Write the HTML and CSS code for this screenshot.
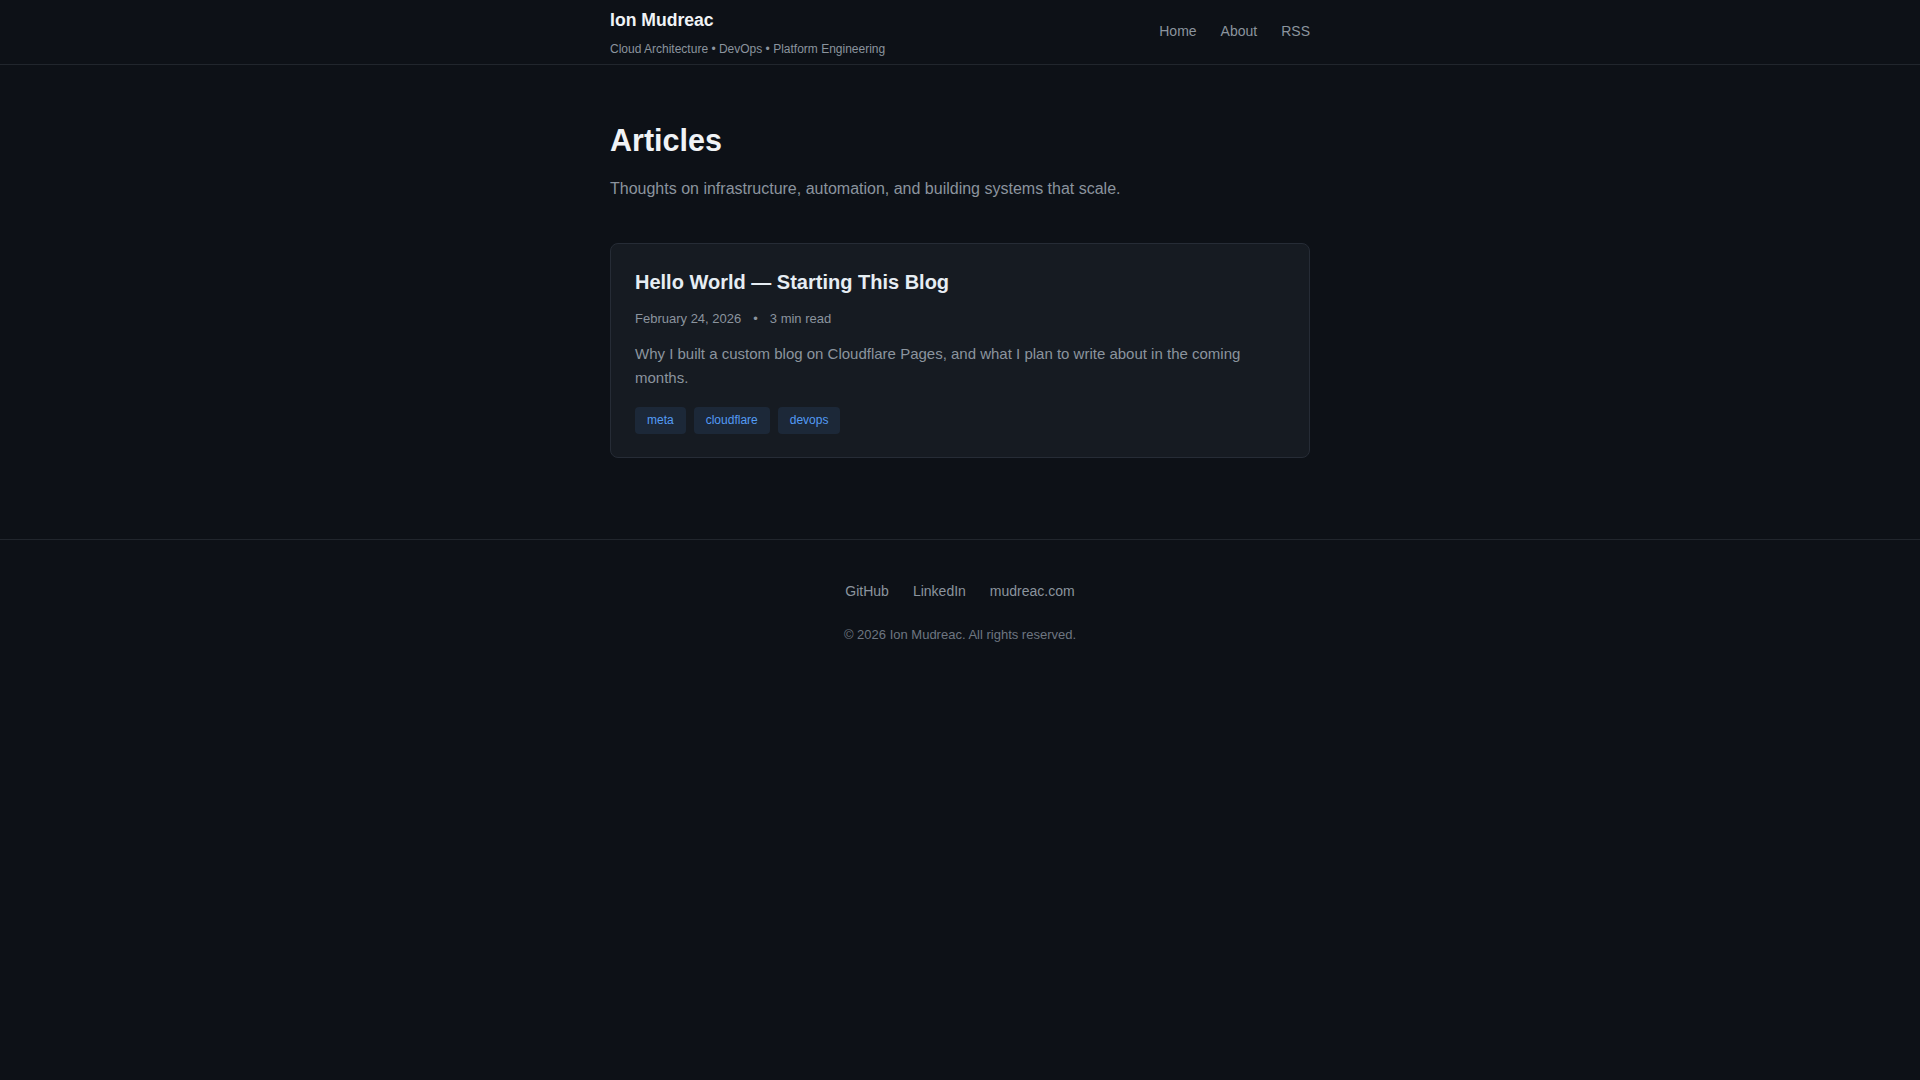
FILE: index.html
```html
<!DOCTYPE html>
<html lang="en">
<head>
<meta charset="utf-8">
<title>Ion Mudreac — Articles</title>
<link rel="stylesheet" href="styles.css">
</head>
<body>
<header class="site-header">
  <div class="container header-inner">
    <div class="brand">
      <a class="site-name" href="#">Ion Mudreac</a>
      <p class="site-tagline">Cloud Architecture • DevOps • Platform Engineering</p>
    </div>
    <nav class="nav">
      <a href="#">Home</a>
      <a href="#">About</a>
      <a href="#">RSS</a>
    </nav>
  </div>
</header>

<main class="container main">
  <h1 class="page-title">Articles</h1>
  <p class="page-lead">Thoughts on infrastructure, automation, and building systems that scale.</p>

  <article class="post-card">
    <h2 class="post-title"><a href="#">Hello World — Starting This Blog</a></h2>
    <div class="post-meta">
      <span>February 24, 2026</span>
      <span class="sep">•</span>
      <span>3 min read</span>
    </div>
    <p class="post-excerpt">Why I built a custom blog on Cloudflare Pages, and what I plan to write about in the coming months.</p>
    <div class="tags">
      <a class="tag" href="#">meta</a>
      <a class="tag" href="#">cloudflare</a>
      <a class="tag" href="#">devops</a>
    </div>
  </article>
</main>

<footer class="site-footer">
  <div class="footer-links">
    <a href="#">GitHub</a>
    <a href="#">LinkedIn</a>
    <a href="#">mudreac.com</a>
  </div>
  <p class="copyright">© 2026 Ion Mudreac. All rights reserved.</p>
</footer>
</body>
</html>
```

FILE: styles.css
```css
* { box-sizing: border-box; }

html, body {
  margin: 0;
  padding: 0;
}

body {
  background: #0d1117;
  color: #e6edf3;
  font-family: "Liberation Sans", Arial, sans-serif;
  min-height: 100vh;
}

a { text-decoration: none; color: inherit; }

.container {
  width: 700px;
  margin: 0 auto;
}

.site-header {
  border-bottom: 1px solid #21262d;
}

.header-inner {
  display: flex;
  justify-content: space-between;
  align-items: center;
  padding: 8px 0 6px;
}

.brand {
  display: flex;
  flex-direction: column;
}

.site-name {
  font-size: 17.6px;
  font-weight: 700;
  line-height: 24px;
  color: #f0f3f6;
}

.site-tagline {
  margin: 8px 0 0;
  font-size: 12px;
  line-height: 18px;
  color: #8b949e;
}

.nav {
  display: flex;
  gap: 24px;
  font-size: 14px;
  line-height: 20px;
  margin-bottom: 4px;
}

.nav a { color: #8b949e; }

.main {
  padding: 57px 0 49px;
}

.page-title {
  margin: 0;
  font-size: 30.5px;
  line-height: 36px;
  font-weight: 700;
  color: #f0f3f6;
}

.page-lead {
  margin: 18px 0 0;
  font-size: 16px;
  line-height: 25.6px;
  color: #8b949e;
}

.post-card {
  margin-top: 41px;
  background: #161b22;
  border: 1px solid #262c36;
  border-radius: 8px;
  padding: 24px 24px 23px;
}

.post-title {
  margin: 0 0 13px;
  font-size: 20px;
  line-height: 28px;
  font-weight: 700;
  color: #e6edf3;
}

.post-meta {
  display: flex;
  align-items: center;
  gap: 12px;
  font-size: 13px;
  line-height: 19.5px;
  color: #8b949e;
}

.post-excerpt {
  margin: 13.5px 0 0;
  font-size: 15px;
  line-height: 24px;
  color: #8b949e;
}

.tags {
  display: flex;
  gap: 8px;
  margin-top: 17px;
}

.tag {
  background: #1c2838;
  color: #539bf5;
  font-size: 12px;
  line-height: 15.6px;
  padding: 6px 12px;
  border-radius: 4px;
}

.site-footer {
  margin-top: 32px;
  border-top: 1px solid #21262d;
  padding: 40px 0;
  text-align: center;
}

.footer-links {
  display: flex;
  justify-content: center;
  gap: 24px;
  font-size: 14px;
  line-height: 22.4px;
}

.footer-links a { color: #8b949e; }

.copyright {
  margin: 22px 0 0;
  font-size: 13px;
  line-height: 20.8px;
  color: #6e7681;
}
```
